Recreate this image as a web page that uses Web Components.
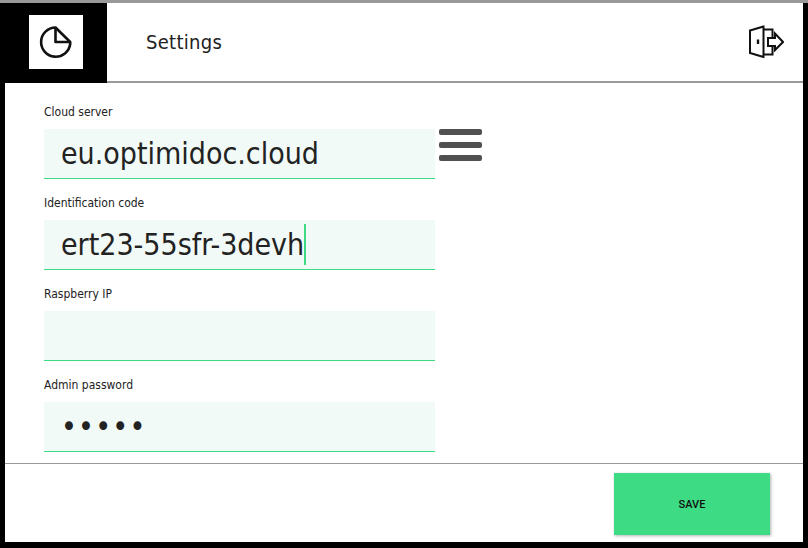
<!DOCTYPE html>
<html>
<head>
<meta charset="utf-8">
<title>Settings</title>
<style>
  html, body { margin: 0; height: 100%; background: #000; }
  body { font-family: "DejaVu Sans Condensed", "DejaVu Sans", sans-serif; overflow: hidden; }
</style>
</head>
<body>
<app-shell>
  <app-header slot="header" title="Settings"></app-header>
  <settings-field label="Cloud server" value="eu.optimidoc.cloud" menu></settings-field>
  <settings-field label="Identification code" value="ert23-55sfr-3devh" caret></settings-field>
  <settings-field label="Raspberry IP" value=""></settings-field>
  <settings-field label="Admin password" value="•••••" secret></settings-field>
  <save-button slot="footer">SAVE</save-button>
</app-shell>
<script>
class AppShell extends HTMLElement {
  constructor() {
    super();
    this.attachShadow({ mode: 'open' });
    this.shadowRoot.innerHTML = `
      <style>
        :host { display: flex; flex-direction: column; box-sizing: border-box; width: 808px; height: 548px; background: #000; padding: 0 5px 6px 5px; }
        .top { height: 3px; margin: 0 -5px; background: #999; flex: none; }
        .main { flex: 1; min-height: 0; background: #fff; overflow: hidden; padding: 16px 0 0 39px; display: flex; flex-direction: column; gap: 11px; }
        .foot { height: 79px; flex: none; background: #fff; border-top: 1px solid #999; box-sizing: border-box; display: flex; justify-content: flex-end; padding: 9px 33px 0 0; }
      </style>
      <div class="top"></div>
      <slot name="header"></slot>
      <div class="main"><slot></slot></div>
      <div class="foot"><slot name="footer"></slot></div>
    `;
  }
}

class AppHeader extends HTMLElement {
  constructor() {
    super();
    this.attachShadow({ mode: 'open' });
    this.shadowRoot.innerHTML = `
      <style>
        :host { display: flex; flex: none; height: 80px; margin: 0; background: #fff; border-bottom: 2px solid #999; box-sizing: border-box; align-items: stretch; }
        .brand { width: 102px; margin-bottom: -2px; background: #000; display: flex; align-items: center; justify-content: flex-start; padding-left: 24px; box-sizing: border-box; }
        .logo { width: 54px; height: 54px; background: #fff; display: flex; align-items: center; justify-content: center; margin-top: -2px; }
        .title { margin-left: 39px; font-size: 20px; line-height: 78px; color: #222; letter-spacing: .3px; flex: 1; }
        .exit { width: 36px; height: 36px; margin: 21px 19px 0 0; }
      </style>
      <div class="brand"><div class="logo">
        <svg width="34" height="34" viewBox="0 0 34 34" fill="none" stroke="#111" stroke-width="2.6" stroke-linejoin="round">
          <path d="M16.5 2.5 A14.6 14.6 0 1 0 31.2 19 L31.2 17 L16.5 2.5 Z" transform="translate(0 0)"/>
          <path d="M16.5 3 V17 H31"/>
        </svg>
      </div></div>
      <div class="title"></div>
      <svg class="exit" viewBox="0 0 36 36" fill="none" stroke="#111" stroke-width="2" stroke-linejoin="miter">
        <path d="M2 6.5 L15.5 2.5 V33 L2 29 Z"/>
        <path d="M15.5 5.5 H24.5 V13.5"/>
        <path d="M24.5 22 V30.5 H15.5"/>
        <path d="M20 14 H27 V9.5 L35 18 L27 26 V22 H20 Z"/>
        <path d="M10 15.5 V20" stroke-width="2.4"/>
      </svg>
    `;
    this.shadowRoot.querySelector('.title').textContent = this.getAttribute('title');
  }
}

class SettingsField extends HTMLElement {
  constructor() {
    super();
    this.attachShadow({ mode: 'open' });
    this.shadowRoot.innerHTML = `
      <style>
        :host { display: block; position: relative; flex: none; width: 391px; }
        label { display: block; font-size: 12px; line-height: 16px; height: 16px; margin-bottom: 9px; margin-top: 5px; color: #222; }
        .box { height: 50px; box-sizing: border-box; background: #f1faf6; border-bottom: 1px solid #3ddc84; padding-left: 17px; display: flex; align-items: center; font-size: 30px; color: #222; white-space: nowrap; }
        .caret { width: 2px; height: 41px; background: #3ddc84; margin-left: 0; }
        .secret { letter-spacing: 1.2px; font-size: 30px; }
        .menu { position: absolute; left: 395px; top: 30px; width: 43px; display: flex; flex-direction: column; gap: 7px; }
        .menu i { display: block; height: 6px; border-radius: 2px; background: #505050; }
      </style>
      <label></label>
      <div class="box"><span class="val"></span></div>
    `;
    const root = this.shadowRoot;
    root.querySelector('label').textContent = this.getAttribute('label');
    const val = root.querySelector('.val');
    val.textContent = this.getAttribute('value');
    if (this.hasAttribute('secret')) val.className = 'val secret';
    if (this.hasAttribute('caret')) {
      const c = document.createElement('span');
      c.className = 'caret';
      root.querySelector('.box').appendChild(c);
    }
    if (this.hasAttribute('menu')) {
      const m = document.createElement('div');
      m.className = 'menu';
      m.innerHTML = '<i></i><i></i><i></i>';
      root.appendChild(m);
    }
  }
}

class SaveButton extends HTMLElement {
  constructor() {
    super();
    this.attachShadow({ mode: 'open' });
    this.shadowRoot.innerHTML = `
      <style>
        :host { display: flex; width: 156px; height: 62px; align-items: center; justify-content: center; background: #3ddc84; color: #111; font: 500 11px Roboto, sans-serif; box-shadow: 1px 1px 3px rgba(0,0,0,.3); cursor: pointer; }
      </style>
      <slot></slot>
    `;
  }
}

customElements.define('app-shell', AppShell);
customElements.define('app-header', AppHeader);
customElements.define('settings-field', SettingsField);
customElements.define('save-button', SaveButton);
</script>
</body>
</html>
